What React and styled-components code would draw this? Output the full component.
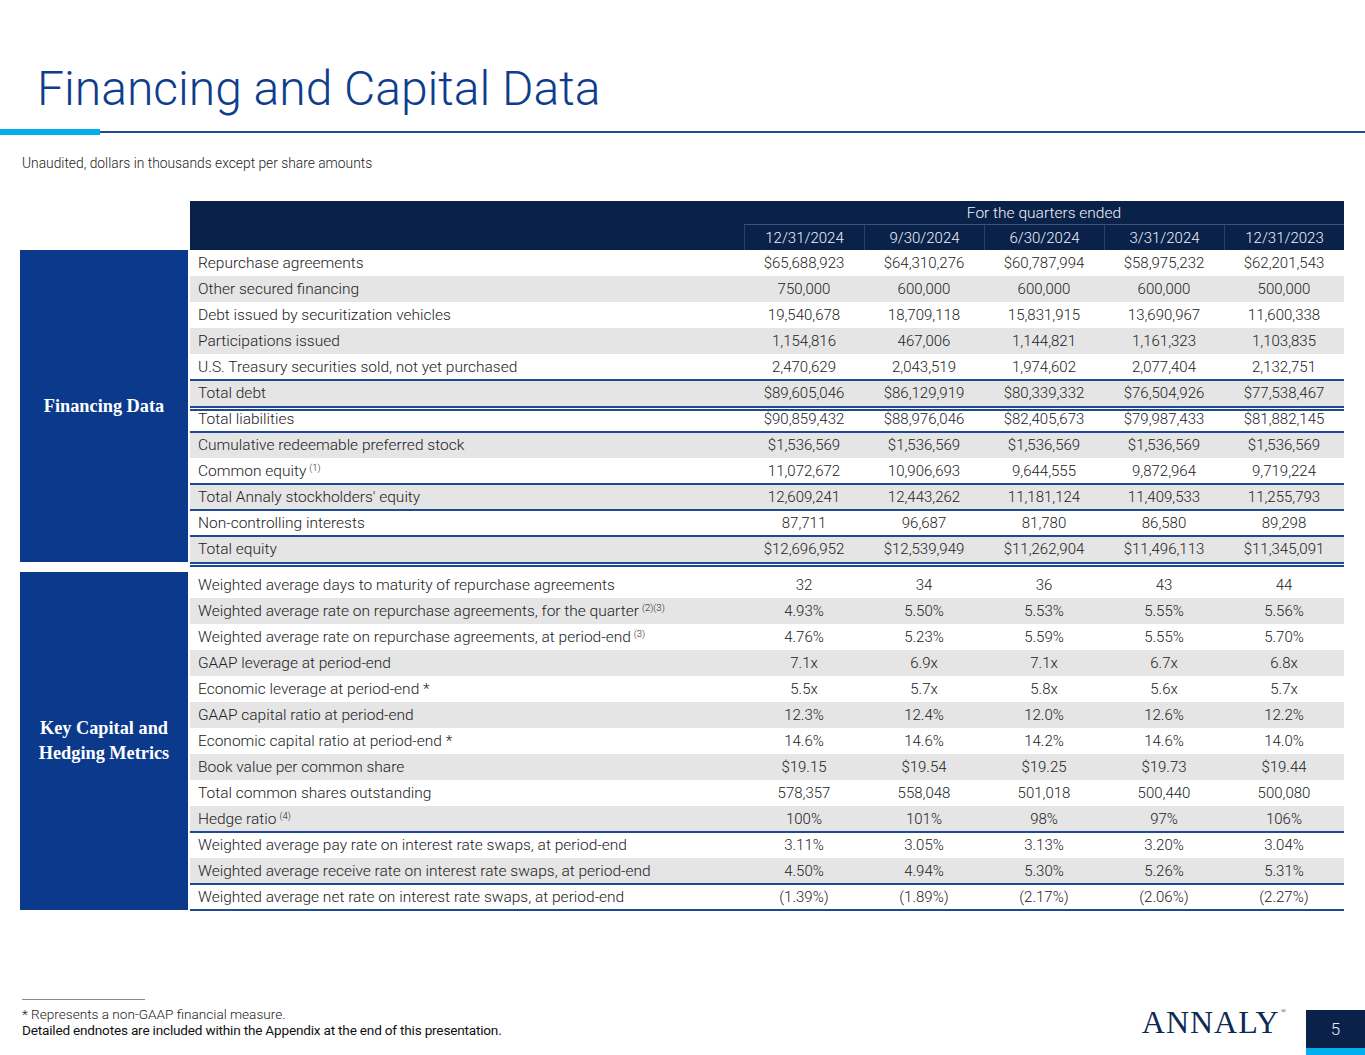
import React from "react";
import styled, { createGlobalStyle, css } from "styled-components";

// Colours
const navy = "#0a2149";
const royal = "#0b3a8c";
const rule = "#1c4b94";
const sky = "#00aeef";

const GlobalStyle = createGlobalStyle`
  html, body {
    margin: 0;
    padding: 0;
    background: #ffffff;
  }
  body {
    font-family: "Roboto", "Liberation Sans", sans-serif;
    color: #222222;
  }
`;

const dates = ["12/31/2024", "9/30/2024", "6/30/2024", "3/31/2024", "12/31/2023"];

// top: blue line above, bottom: "line" | "double"
const financingRows = [
  { label: "Repurchase agreements", values: ["$65,688,923", "$64,310,276", "$60,787,994", "$58,975,232", "$62,201,543"] },
  { label: "Other secured financing", values: ["750,000", "600,000", "600,000", "600,000", "500,000"] },
  { label: "Debt issued by securitization vehicles", values: ["19,540,678", "18,709,118", "15,831,915", "13,690,967", "11,600,338"] },
  { label: "Participations issued", values: ["1,154,816", "467,006", "1,144,821", "1,161,323", "1,103,835"] },
  { label: "U.S. Treasury securities sold, not yet purchased", values: ["2,470,629", "2,043,519", "1,974,602", "2,077,404", "2,132,751"] },
  { label: "Total debt", top: true, bottom: "double", values: ["$89,605,046", "$86,129,919", "$80,339,332", "$76,504,926", "$77,538,467"] },
  { label: "Total liabilities", bottom: "line", values: ["$90,859,432", "$88,976,046", "$82,405,673", "$79,987,433", "$81,882,145"] },
  { label: "Cumulative redeemable preferred stock", values: ["$1,536,569", "$1,536,569", "$1,536,569", "$1,536,569", "$1,536,569"] },
  { label: "Common equity", note: "(1)", values: ["11,072,672", "10,906,693", "9,644,555", "9,872,964", "9,719,224"] },
  { label: "Total Annaly stockholders' equity", top: true, bottom: "line", values: ["12,609,241", "12,443,262", "11,181,124", "11,409,533", "11,255,793"] },
  { label: "Non-controlling interests", values: ["87,711", "96,687", "81,780", "86,580", "89,298"] },
  { label: "Total equity", top: true, bottom: "double", values: ["$12,696,952", "$12,539,949", "$11,262,904", "$11,496,113", "$11,345,091"] },
];

const metricRows = [
  { label: "Weighted average days to maturity of repurchase agreements", values: ["32", "34", "36", "43", "44"] },
  { label: "Weighted average rate on repurchase agreements, for the quarter", note: "(2)(3)", values: ["4.93%", "5.50%", "5.53%", "5.55%", "5.56%"] },
  { label: "Weighted average rate on repurchase agreements, at period-end", note: "(3)", values: ["4.76%", "5.23%", "5.59%", "5.55%", "5.70%"] },
  { label: "GAAP leverage at period-end", values: ["7.1x", "6.9x", "7.1x", "6.7x", "6.8x"] },
  { label: "Economic leverage at period-end *", values: ["5.5x", "5.7x", "5.8x", "5.6x", "5.7x"] },
  { label: "GAAP capital ratio at period-end", values: ["12.3%", "12.4%", "12.0%", "12.6%", "12.2%"] },
  { label: "Economic capital ratio at period-end *", values: ["14.6%", "14.6%", "14.2%", "14.6%", "14.0%"] },
  { label: "Book value per common share", values: ["$19.15", "$19.54", "$19.25", "$19.73", "$19.44"] },
  { label: "Total common shares outstanding", values: ["578,357", "558,048", "501,018", "500,440", "500,080"] },
  { label: "Hedge ratio", note: "(4)", values: ["100%", "101%", "98%", "97%", "106%"] },
  { label: "Weighted average pay rate on interest rate swaps, at period-end", top: true, values: ["3.11%", "3.05%", "3.13%", "3.20%", "3.04%"] },
  { label: "Weighted average receive rate on interest rate swaps, at period-end", values: ["4.50%", "4.94%", "5.30%", "5.26%", "5.31%"] },
  { label: "Weighted average net rate on interest rate swaps, at period-end", top: true, bottom: "line", values: ["(1.39%)", "(1.89%)", "(2.17%)", "(2.06%)", "(2.27%)"] },
];

const DataRows = ({ rows }) =>
  rows.map((row, i) => (
    <Row key={row.label} $shade={i % 2 === 1} $top={row.top} $bottom={row.bottom}>
      <Label>
        {row.label}
        {row.note && <Note>{row.note}</Note>}
      </Label>
      {row.values.map((v, j) => (
        <Value key={j}>{v}</Value>
      ))}
    </Row>
  ));

const App = () => {
  return (
    <>
      <GlobalStyle />
      <Page>
        <Title>Financing and Capital Data</Title>
        <TitleRule>
          <Accent />
          <RuleLine />
        </TitleRule>
        <Subtitle>Unaudited, dollars in thousands except per share amounts</Subtitle>

        <Table>
          <Header>
            <HeaderBlank />
            <HeaderSpan>For the quarters ended</HeaderSpan>
            {dates.map((d) => (
              <HeaderDate key={d}>{d}</HeaderDate>
            ))}
          </Header>

          <Section>
            <Panel>Financing Data</Panel>
            <Rows>
              <DataRows rows={financingRows} />
            </Rows>
          </Section>

          <Section $gap>
            <Panel>
              Key Capital and
              <br />
              Hedging Metrics
            </Panel>
            <Rows>
              <DataRows rows={metricRows} />
            </Rows>
          </Section>
        </Table>

        <Footer>
          <Notes>
            <NoteRule />
            <NoteText>* Represents a non-GAAP financial measure.</NoteText>
            <NoteStrong>Detailed endnotes are included within the Appendix at the end of this presentation.</NoteStrong>
          </Notes>
          <Brand>
            <Logo>
              ANNALY<Reg>®</Reg>
            </Logo>
            <PageNumber>5</PageNumber>
          </Brand>
        </Footer>
      </Page>
    </>
  );
};

const Page = styled.div`
  width: 1365px;
  height: 1055px;
  overflow: hidden;
  display: flex;
  flex-direction: column;
  box-sizing: border-box;
  padding-top: 61px;
`;

const Title = styled.h1`
  margin: 0 0 0 37px;
  font-family: "Roboto", "Liberation Sans", sans-serif;
  font-weight: 300;
  font-size: 48px;
  line-height: 56px;
  color: #0e3d8e;
`;

const TitleRule = styled.div`
  display: flex;
  align-items: center;
  margin-top: 12px;
  height: 6px;
`;

const Accent = styled.div`
  width: 100px;
  height: 6px;
  background: ${sky};
`;

const RuleLine = styled.div`
  flex: 1;
  height: 2px;
  background: ${rule};
`;

const Subtitle = styled.p`
  margin: 20px 0 0 22px;
  font-size: 13.8px;
  line-height: 16px;
  font-weight: 300;
  color: #222;
`;

const Table = styled.div`
  margin: 30px 0 0 20px;
  width: 1324px;
  display: flex;
  flex-direction: column;
`;

const Header = styled.div`
  margin-left: 170px;
  width: 1154px;
  display: grid;
  grid-template-columns: 554px repeat(5, 120px);
  grid-template-rows: 24px 25px;
  background: ${navy};
  color: #f2f4f8;
  font-size: 15px;
  font-weight: 300;
`;

const HeaderBlank = styled.div`
  grid-row: 1 / span 2;
`;

const HeaderSpan = styled.div`
  grid-column: 2 / span 5;
  display: flex;
  align-items: center;
  justify-content: center;
  font-size: 15.5px;
  border-bottom: 1px solid #3b5478;
`;

const HeaderDate = styled.div`
  display: flex;
  align-items: center;
  justify-content: center;
  border-left: 1px solid #2a4268;
  &:first-of-type {
    border-left: none;
  }
`;

const Section = styled.div`
  display: flex;
  gap: 2px;
  margin-top: ${(p) => (p.$gap ? "10px" : "0")};
`;

const Panel = styled.div`
  width: 168px;
  flex-shrink: 0;
  background: ${royal};
  color: #ffffff;
  display: flex;
  align-items: center;
  justify-content: center;
  text-align: center;
  font-family: "Liberation Serif", "DejaVu Serif", serif;
  font-weight: 700;
  font-size: 18.3px;
  line-height: 25px;
`;

const Rows = styled.div`
  width: 1154px;
  display: flex;
  flex-direction: column;
`;

const lineTop = css`
  &::before {
    content: "";
    position: absolute;
    left: 0;
    right: 0;
    top: -1px;
    height: 2px;
    background: ${rule};
    z-index: 1;
  }
`;

const lineBottom = css`
  &::after {
    content: "";
    position: absolute;
    left: 0;
    right: 0;
    bottom: -1px;
    height: 2px;
    background: ${rule};
    z-index: 1;
  }
`;

const doubleBottom = css`
  &::after {
    content: "";
    position: absolute;
    left: 0;
    right: 0;
    top: 100%;
    height: 1px;
    border-top: 2px solid ${rule};
    border-bottom: 2px solid ${rule};
    background: #ffffff;
    z-index: 1;
  }
`;

const Row = styled.div`
  position: relative;
  height: 26px;
  display: grid;
  grid-template-columns: 554px repeat(5, 120px);
  align-items: center;
  background: ${(p) => (p.$shade ? "#e5e5e5" : "#ffffff")};
  font-size: 15px;
  font-weight: 300;
  color: #222;
  ${(p) => p.$top && lineTop}
  ${(p) => p.$bottom === "line" && lineBottom}
  ${(p) => p.$bottom === "double" && doubleBottom}
`;

const Label = styled.div`
  padding-left: 8px;
  white-space: nowrap;
  font-size: 15.5px;
`;

const Note = styled.sup`
  font-size: 9.5px;
  margin-left: 3px;
  vertical-align: 5px;
  line-height: 0;
`;

const Value = styled.div`
  text-align: center;
  white-space: nowrap;
`;

const Footer = styled.div`
  margin-top: auto;
  display: flex;
  justify-content: space-between;
  align-items: flex-end;
`;

const Notes = styled.div`
  padding-left: 22px;
  padding-bottom: 17px;
`;

const NoteRule = styled.div`
  width: 123px;
  height: 1px;
  background: #8a8a8a;
  margin-bottom: 6px;
`;

const NoteText = styled.div`
  font-size: 13.6px;
  line-height: 16px;
  font-weight: 300;
  color: #222;
`;

const NoteStrong = styled.div`
  font-size: 13.6px;
  line-height: 16px;
  font-weight: 400;
  letter-spacing: -0.2px;
  color: #111;
`;

const Brand = styled.div`
  display: flex;
  align-items: flex-end;
  gap: 19px;
`;

const Logo = styled.div`
  font-family: "Liberation Serif", "DejaVu Serif", serif;
  font-size: 32px;
  line-height: 32px;
  letter-spacing: 1px;
  color: #0d2a55;
  margin-bottom: 17px;
  display: flex;
  align-items: flex-start;
`;

const Reg = styled.span`
  font-size: 7px;
  line-height: 10px;
  margin-left: 1px;
`;

const PageNumber = styled.div`
  width: 59px;
  height: 45px;
  box-sizing: border-box;
  background: ${navy};
  border-bottom: 7px solid ${sky};
  color: #e8ecf3;
  font-size: 17px;
  font-weight: 300;
  display: flex;
  align-items: center;
  justify-content: center;
`;

export default App;
